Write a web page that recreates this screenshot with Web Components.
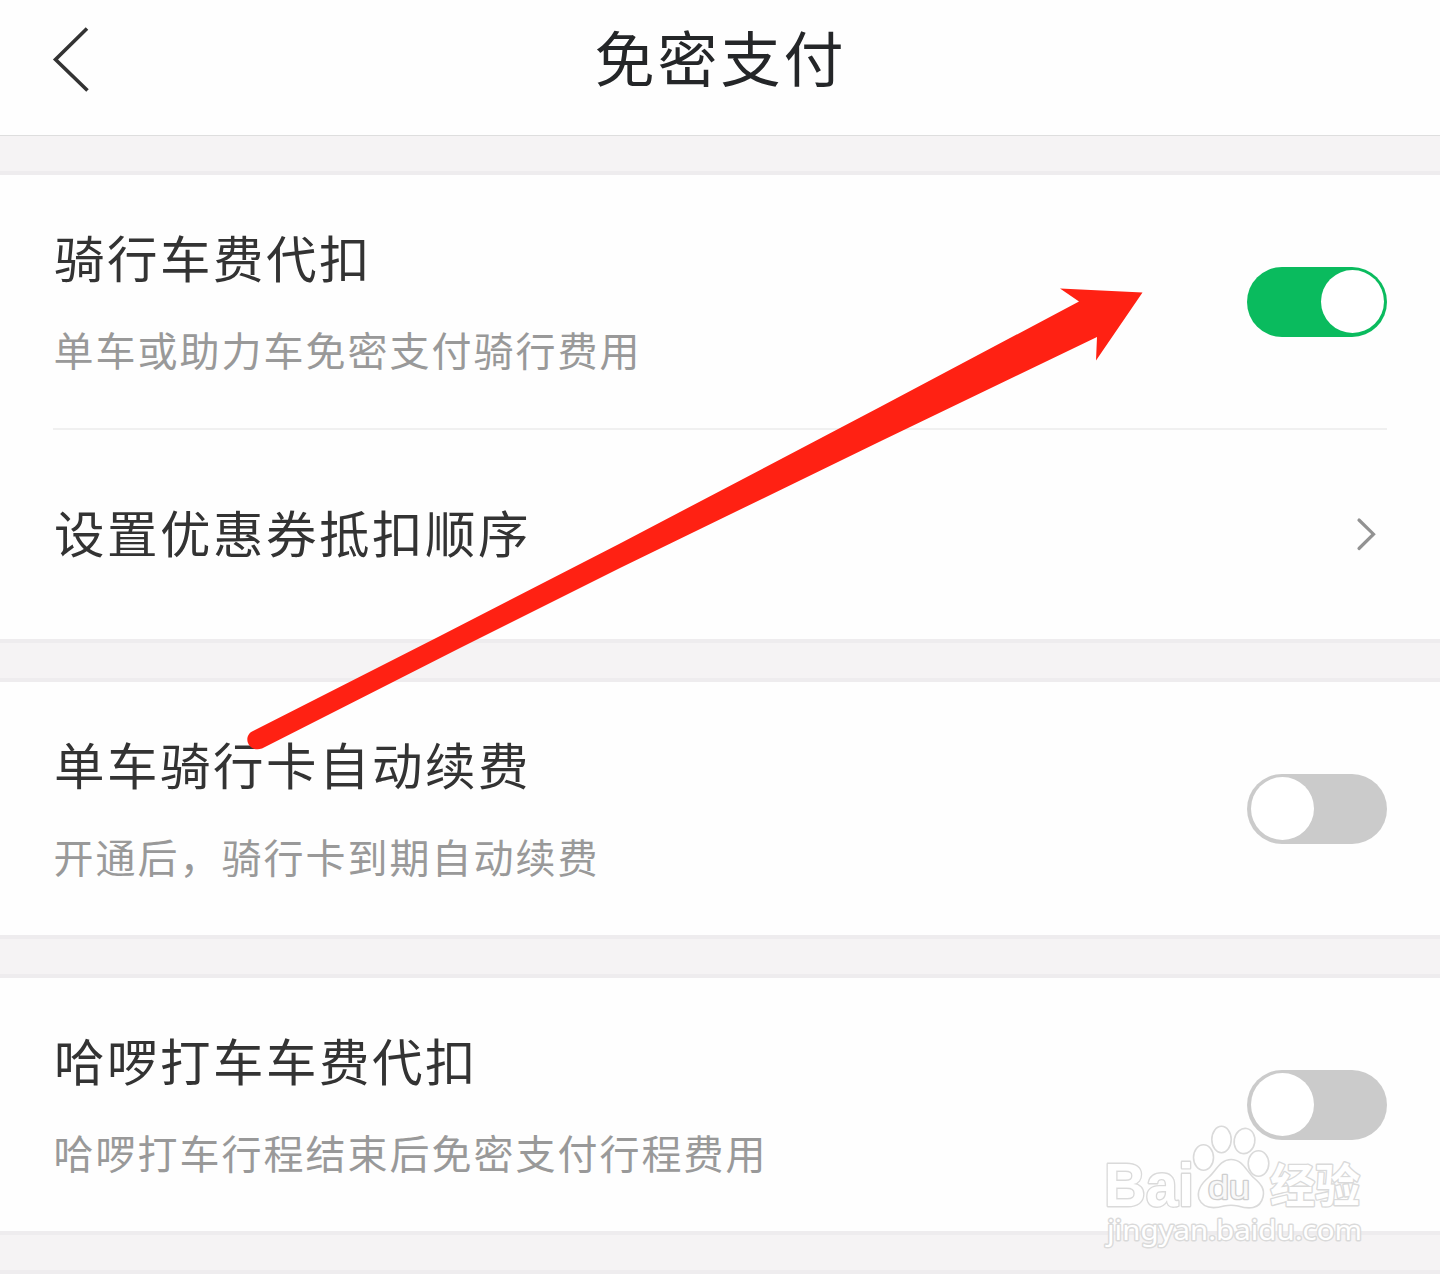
<!DOCTYPE html>
<html lang="zh-CN">
<head>
<meta charset="utf-8">
<title>免密支付</title>
<style>
html,body{margin:0;padding:0;background:#fefefe}
body{font-family:"Noto Sans CJK SC","Noto Sans",sans-serif;height:1280px;overflow:hidden}
</style>
</head>
<body>
<pay-page>
  <nav-header>免密支付</nav-header>
  <band-gap first></band-gap>
  <setting-row><span>骑行车费代扣</span><span slot="note">单车或助力车免密支付骑行费用</span><toggle-switch slot="end" on></toggle-switch></setting-row>
  <row-divider></row-divider>
  <setting-row single><span>设置优惠券抵扣顺序</span><chevron-icon slot="end"></chevron-icon></setting-row>
  <band-gap></band-gap>
  <setting-row><span>单车骑行卡自动续费</span><span slot="note">开通后，骑行卡到期自动续费</span><toggle-switch slot="end"></toggle-switch></setting-row>
  <band-gap></band-gap>
  <setting-row><span>哈啰打车车费代扣</span><span slot="note">哈啰打车行程结束后免密支付行程费用</span><toggle-switch slot="end"></toggle-switch></setting-row>
  <band-gap></band-gap>
  <pointer-arrow slot="overlay"></pointer-arrow>
  <water-mark slot="overlay"></water-mark>
</pay-page>
<script>
const define = (name, html) => customElements.define(name, class extends HTMLElement {
  constructor() {
    super();
    this.attachShadow({ mode: "open" }).innerHTML = html;
  }
});

define("pay-page", `<style>
:host{display:block;position:relative;width:1440px;height:1280px;overflow:hidden;background:#fefefe}
main{display:flex;flex-direction:column}
</style><main><slot></slot></main><slot name="overlay"></slot>`);

define("nav-header", `<style>
:host{display:grid;grid-template-columns:140px 1fr 140px;align-items:center;height:136px;padding-bottom:16px;border-bottom:1px solid #dedede;box-sizing:border-box}
svg{display:block;margin-left:50px}
h1{margin:-8px 0 0;text-align:center;font-size:60px;font-weight:400;line-height:90px;letter-spacing:3px;text-indent:1px;color:#242628;white-space:nowrap}
</style><svg width="44" height="72" viewBox="0 0 44 72" fill="none" stroke="#333" stroke-width="3.6"><path d="M37 4.500L5.500 35.500L37.500 66.500"/></svg><h1><slot></slot></h1>`);

define("band-gap", `<style>
:host{display:block;height:43px;box-sizing:border-box;background:#f5f3f4;border:solid #eeecee;border-width:4px 0}
:host([first]){height:39px;border-top:0}
</style>`);

define("row-divider", `<style>:host{display:block;height:2px;margin:0 53px;background:#f0f0f0}</style>`);

define("setting-row", `<style>
:host{display:flex;align-items:center;justify-content:space-between;height:253px;padding:0 53px;box-sizing:border-box}
:host([single]){height:209px}
.text{display:flex;flex-direction:column;gap:31px;padding:0 0 6px 1px}
:host([single]) .text{padding-bottom:8px}
.title{font-size:50.500px;line-height:70px;letter-spacing:2.500px;color:#333;white-space:nowrap}
.note{font-size:40px;line-height:54px;letter-spacing:2px;text-indent:-.5px;color:#999;white-space:nowrap}
:host([single]) .note{display:none}
</style><div class="text"><div class="title"><slot></slot></div><div class="note"><slot name="note"></slot></div></div><slot name="end"></slot>`);

define("toggle-switch", `<style>
:host{display:flex;width:140px;height:70px;padding:3.500px;box-sizing:border-box;border-radius:35px;background:#cbcbcb}
:host([on]){background:#0abb5e;justify-content:flex-end}
i{display:block;width:63px;height:63px;border-radius:50%;background:#fff}
</style><i></i>`);

define("chevron-icon", `<style>:host{display:block;margin-right:7px}svg{display:block}</style>
<svg width="26" height="40" viewBox="0 0 26 40" fill="none" stroke="#929292" stroke-width="3.200" stroke-linecap="round"><path d="M5 5L19.500 19.200L5 33.500"/></svg>`);

define("pointer-arrow", `<style>:host{position:absolute;left:240px;top:280px}svg{display:block}</style>
<svg width="910" height="475" viewBox="240 280 910 475"><path fill="#ff2113" d="M253 731L440 636L620 543.500L880 407L1079 301.500L1060 288.500L1142.500 292.500L1096 360.500L1097 337L880 441.500L620 568L460 648L262 748.500C248 753 242 736 253 731Z"/></svg>`);

define("water-mark", `<style>:host{position:absolute;left:1095px;top:1115px}svg{display:block}
text{paint-order:stroke;fill:#fff;stroke:#dadada;stroke-width:2.800;stroke-linejoin:round}
</style>
<svg width="280" height="145" viewBox="1095 1115 280 145">
<text x="1104" y="1206" font-family="Liberation Sans" font-weight="700" font-size="61" textLength="90" lengthAdjust="spacingAndGlyphs">Bai</text>
<g fill="#fff" stroke="#dadada" stroke-width="1.600">
<ellipse cx="1203.500" cy="1157.500" rx="10" ry="12.800"/><ellipse cx="1221.500" cy="1139.500" rx="9.700" ry="13.200"/><ellipse cx="1244.500" cy="1141" rx="10.300" ry="12.700" transform="rotate(10 1244.500 1141)"/><ellipse cx="1258.500" cy="1163.500" rx="10.300" ry="12.700"/>
<path d="M1231 1159.500C1243 1159.500 1246 1171 1254 1178C1261 1184 1265 1189 1263 1197C1260 1210 1248 1209 1238 1206C1233 1205 1229 1205 1224 1206C1213 1209 1203 1208 1199 1199C1196 1189 1203 1182 1209 1177C1216 1171 1220 1159.500 1231 1159.500Z"/></g>
<text x="1208" y="1199" font-family="Liberation Sans" font-size="34" textLength="42" lengthAdjust="spacingAndGlyphs" style="fill:#f8f8f8;stroke:#cfcfcf;stroke-width:2.600">du</text>
<text x="1270" y="1202" font-family="Noto Sans CJK SC" font-weight="700" font-size="46" textLength="90" lengthAdjust="spacingAndGlyphs">经验</text>
<text x="1107" y="1240" font-family="Noto Sans" font-size="28" textLength="255" lengthAdjust="spacingAndGlyphs">jingyan.baidu.com</text>
</svg>`);
</script>
</body>
</html>
